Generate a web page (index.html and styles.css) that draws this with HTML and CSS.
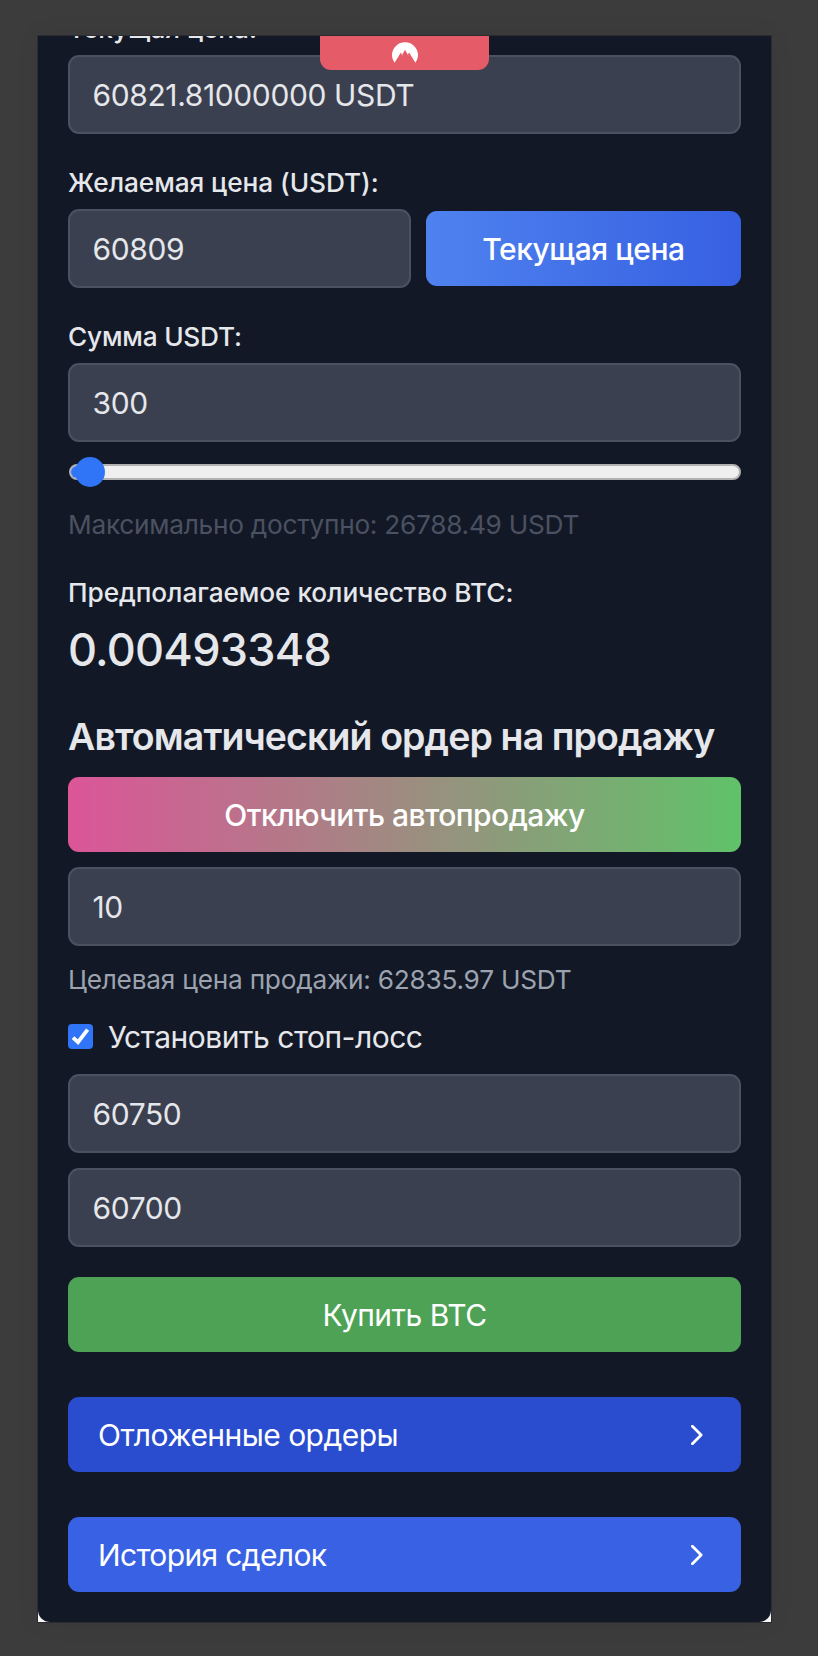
FILE: index.html
```html
<!DOCTYPE html>
<html lang="ru">
<head>
<meta charset="utf-8">
<title>Купить BTC</title>
<link rel="stylesheet" href="styles.css">
</head>
<body>
<main class="window">
  <div class="tab">
    <svg class="tab-icon" viewBox="0 0 26 21" width="26" height="21"><path fill="#fff" d="M2.6 20.8A13 12.8 0 1 1 23.4 20.8L17.1 10.6L16 12.3L16.6 14L13 7.8L10.3 12.4L10.4 14L8.9 10.6Z"/></svg>
  </div>
  <form class="panel">
    <div class="field">
      <label class="label">Текущая цена:</label>
      <input class="input" value="60821.81000000 USDT" readonly>
    </div>
    <div class="field">
      <label class="label">Желаемая цена (USDT):</label>
      <div class="row">
        <input class="input" value="60809">
        <button type="button" class="btn btn-price"><span>Текущая цена</span></button>
      </div>
    </div>
    <label class="label label-sum">Сумма USDT:</label>
    <input class="input" value="300">
    <div class="slider"><div class="track"><div class="fill"></div></div><div class="thumb"></div></div>
    <p class="note note-dim">Максимально доступно: 26788.49 USDT</p>
    <label class="label label-amount">Предполагаемое количество BTC:</label>
    <p class="amount">0.00493348</p>
    <h2 class="title">Автоматический ордер на продажу</h2>
    <div class="stack">
      <button type="button" class="btn btn-auto"><span>Отключить автопродажу</span></button>
      <input class="input" value="10">
      <p class="note">Целевая цена продажи: 62835.97 USDT</p>
    </div>
    <label class="check">
      <svg class="check-box" viewBox="0 0 25 25" width="25" height="25"><rect width="25" height="25" rx="4" fill="#3074f7"/><path d="M5 13.6L10 18.2L19.6 5.6" fill="none" stroke="#fff" stroke-width="3.8"/></svg>
      <span>Установить стоп-лосс</span>
    </label>
    <div class="stack">
      <input class="input" value="60750">
      <input class="input" value="60700">
    </div>
    <button type="button" class="btn btn-buy"><span>Купить BTC</span></button>
    <button type="button" class="btn btn-link btn-orders"><span>Отложенные ордеры</span><svg viewBox="0 0 12 20" width="12" height="20"><path d="M1.4 1.3L10.1 10L1.4 18.7" fill="none" stroke="#fff" stroke-width="2.8" stroke-linecap="round" stroke-linejoin="round"/></svg></button>
    <button type="button" class="btn btn-link btn-history"><span>История сделок</span><svg viewBox="0 0 12 20" width="12" height="20"><path d="M1.4 1.3L10.1 10L1.4 18.7" fill="none" stroke="#fff" stroke-width="2.8" stroke-linecap="round" stroke-linejoin="round"/></svg></button>
  </form>
</main>
</body>
</html>
```
FILE: styles.css
```css
* { box-sizing: border-box; }
body {
  margin: 0;
  padding: 36px 47px 34px 38px;
  height: 1656px;
  background: #3c3c3c;
  font-family: Inter, "Liberation Sans", sans-serif;
  font-size: 30px;
  color: #e5e7eb;
  overflow: hidden;
}
p, h2 { margin: 0; }
.window {
  position: relative;
  height: 1586px;
  background: #f5f5f3;
  overflow: hidden;
  outline: 1px solid #2b2c31;
  box-shadow: 0 0 24px 1px rgba(0, 0, 0, .06);
}
.tab {
  position: absolute;
  top: 0;
  left: 282px;
  width: 169px;
  height: 34px;
  border-radius: 0 0 11px 11px;
  background: #e55c68;
  display: flex;
  justify-content: center;
  padding-top: 6px;
}
.panel {
  display: flex;
  flex-direction: column;
  height: 1612px;
  margin-top: -26px;
  padding: 0 30px;
  background: #121826;
  border-radius: 0 0 12px 12px;
}
.field { margin-bottom: 30px; }
.label {
  display: block;
  height: 37px;
  margin-bottom: 8px;
  font-size: 26.25px;
  line-height: 37px;
  font-weight: 500;
  letter-spacing: -.07px;
  white-space: nowrap;
}
.label-sum { letter-spacing: -.22px; }
.input {
  display: block;
  width: 100%;
  min-width: 0;
  height: 79px;
  padding: 0 22.5px;
  border: 2px solid #4b5161;
  border-radius: 11px;
  background: #3b4050;
  color: #e5e7eb;
  font: 400 30px/45px Inter, "Liberation Sans", sans-serif;
  letter-spacing: -.38px;
}
.row { display: grid; grid-template-columns: 343px 315px; gap: 15px; align-items: center; }
.btn {
  display: flex;
  align-items: center;
  justify-content: center;
  width: 100%;
  height: 75px;
  padding: 2px 30px 0;
  border: 0;
  border-radius: 11px;
  color: #fff;
  font: 400 30px/45px Inter, "Liberation Sans", sans-serif;
  letter-spacing: -.5px;
  white-space: nowrap;
}
.btn-price { background: linear-gradient(90deg, #4f82ef, #3660e2); font-weight: 500; letter-spacing: -.44px; }
.slider { position: relative; height: 30px; margin-top: 15px; display: flex; align-items: center; }
.track { width: 672px; height: 16px; margin-left: 1px; border: 2px solid #b1b1b3; border-radius: 8px; background: #efefef; overflow: hidden; }
.fill { width: 22px; height: 12px; background: #3074f7; }
.thumb { position: absolute; left: 7px; top: 0; width: 30px; height: 30px; border-radius: 50%; background: #3074f7; }
.note { height: 37px; font-size: 26.25px; line-height: 37px; letter-spacing: -.24px; color: #9ca3af; white-space: nowrap; }
.note-dim { margin-top: 19px; letter-spacing: -.27px; color: #4b5161; }
.label-amount { margin-top: 31px; }
.amount { height: 60px; padding-top: 1px; font-size: 45px; line-height: 60px; font-weight: 500; letter-spacing: -.75px; }
.title { height: 52px; margin: 32px 0 14px; font-size: 37.5px; line-height: 52px; font-weight: 600; letter-spacing: -.9px; white-space: nowrap; }
.stack { display: flex; flex-direction: column; gap: 15px; }
.btn-auto { background: linear-gradient(90deg, #dc5598, #60c269); font-weight: 500; letter-spacing: -.56px; }
.check { display: flex; align-items: center; gap: 15px; height: 45px; margin: 17px 0 14px; line-height: 45px; letter-spacing: -.48px; white-space: nowrap; }
.check-box { margin-top: -2px; }
.btn-buy { margin-top: 30px; background: #4ea255; }
.btn-link { justify-content: space-between; margin-top: 45px; padding-right: 38px; letter-spacing: -.64px; }
.btn-link svg { margin-top: -2px; }
.btn-orders { background: #2a4dcf; letter-spacing: -.54px; }
.btn-history { background: #3861e4; }
```
